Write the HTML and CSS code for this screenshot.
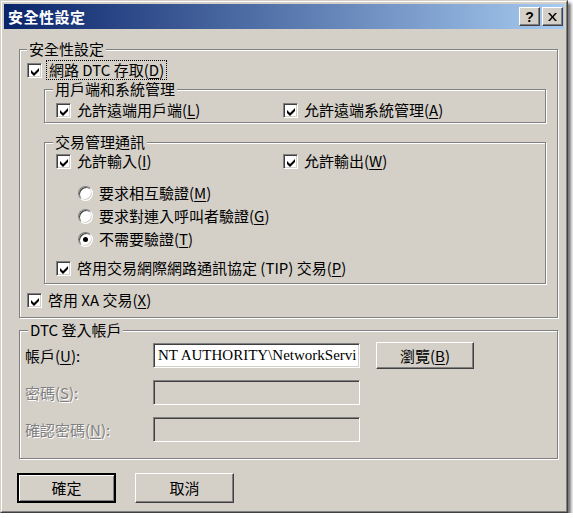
FILE: index.html
```html
<!DOCTYPE html>
<html lang="zh-Hant">
<head>
<meta charset="utf-8">
<title>安全性設定</title>
<link rel="stylesheet" href="styles.css">
</head>
<body>
<div class="window">
  <div class="frame">
    <div class="titlebar">
      <span class="title">安全性設定</span>
      <div class="title-btns">
        <span class="tbtn help">?</span>
        <span class="tbtn close"><svg width="9" height="8" viewBox="0 0 9 8"><path d="M0 0h2l2.5 3 2.5-3h2L5.5 4 9 8H7L4.5 5 2 8H0l3.5-4z" fill="#000"/></svg></span>
      </div>
    </div>
    <div class="body">
      <fieldset class="group outer">
        <legend>安全性設定</legend>
        <div class="check row">
          <span class="box"><svg class="tick" viewBox="0 0 10 10"><path d="M1 4 4 7 9 2V5L4 10 1 7Z"/></svg></span><span class="lbl focus">網路 DTC 存取(<u>D</u>)</span>
        </div>
        <fieldset class="group inner admin">
          <legend>用戶端和系統管理</legend>
          <div class="pair">
            <div class="check row"><span class="box"><svg class="tick" viewBox="0 0 10 10"><path d="M1 4 4 7 9 2V5L4 10 1 7Z"/></svg></span><span class="lbl">允許遠端用戶端(<u>L</u>)</span></div>
            <div class="check row"><span class="box"><svg class="tick" viewBox="0 0 10 10"><path d="M1 4 4 7 9 2V5L4 10 1 7Z"/></svg></span><span class="lbl">允許遠端系統管理(<u>A</u>)</span></div>
          </div>
        </fieldset>
        <fieldset class="group inner tx">
          <legend>交易管理通訊</legend>
          <div class="pair">
            <div class="check row"><span class="box"><svg class="tick" viewBox="0 0 10 10"><path d="M1 4 4 7 9 2V5L4 10 1 7Z"/></svg></span><span class="lbl">允許輸入(<u>I</u>)</span></div>
            <div class="check row"><span class="box"><svg class="tick" viewBox="0 0 10 10"><path d="M1 4 4 7 9 2V5L4 10 1 7Z"/></svg></span><span class="lbl">允許輸出(<u>W</u>)</span></div>
          </div>
          <div class="radios">
            <div class="radio row"><span class="dot"></span><span class="lbl">要求相互驗證(<u>M</u>)</span></div>
            <div class="radio row"><span class="dot"></span><span class="lbl">要求對連入呼叫者驗證(<u>G</u>)</span></div>
            <div class="radio row"><span class="dot on"></span><span class="lbl">不需要驗證(<u>T</u>)</span></div>
          </div>
          <div class="check row tip"><span class="box"><svg class="tick" viewBox="0 0 10 10"><path d="M1 4 4 7 9 2V5L4 10 1 7Z"/></svg></span><span class="lbl">啓用交易網際網路通訊協定 (TIP) 交易(<u>P</u>)</span></div>
        </fieldset>
        <div class="check row xa"><span class="box"><svg class="tick" viewBox="0 0 10 10"><path d="M1 4 4 7 9 2V5L4 10 1 7Z"/></svg></span><span class="lbl">啓用 XA 交易(<u>X</u>)</span></div>
      </fieldset>

      <fieldset class="group account">
        <legend>DTC 登入帳戶</legend>
        <div class="form">
          <span class="flabel">帳戶(<u>U</u>):</span>
          <div class="field">NT AUTHORITY\NetworkServi</div>
          <span class="btn browse">瀏覽(<u>B</u>)</span>
          <span class="flabel disabled">密碼(<u>S</u>):</span>
          <div class="field off"></div>
          <span></span>
          <span class="flabel disabled">確認密碼(<u>N</u>):</span>
          <div class="field off"></div>
          <span></span>
        </div>
      </fieldset>

      <div class="actions">
        <span class="btn default">確定</span>
        <span class="btn">取消</span>
      </div>
    </div>
  </div>
</div>
</body>
</html>
```

FILE: styles.css
```css
* { box-sizing: border-box; }
html, body { margin: 0; padding: 0; background: #fff; }
body {
  font-family: "Noto Sans CJK TC", "Noto Sans", sans-serif;
  font-size: 15px;
  line-height: 18px;
  color: #000;
}
u { text-decoration: underline; text-underline-offset: 2px; text-decoration-thickness: 1px; }

.window {
  width: 568px;
  height: 513px;
  background: #d4d0c8;
  border: 1px solid;
  border-color: #d4d0c8 #404040 #404040 #d4d0c8;
  box-shadow: 3px 3px 3px rgba(0, 0, 0, 0.55);
}
.frame {
  height: 100%;
  border: 1px solid;
  border-color: #fff #808080 #808080 #fff;
  padding: 2px;
  display: flex;
  flex-direction: column;
}
.titlebar {
  height: 25px;
  flex: none;
  display: flex;
  align-items: center;
  justify-content: space-between;
  padding: 0 1px 0 4px;
  background: linear-gradient(to right, #0a246a, #a6caf0);
}
.title { color: #fff; font-weight: 700; font-size: 15px; letter-spacing: 0.5px; }
.title-btns { display: flex; gap: 1px; }
.tbtn {
  width: 21px;
  height: 19px;
  display: flex;
  align-items: center;
  justify-content: center;
  background: #d4d0c8;
  border: 1px solid;
  border-color: #fff #404040 #404040 #fff;
  box-shadow: inset -1px -1px 0 #808080;
  font-family: "Liberation Sans", sans-serif;
  font-weight: 700;
  font-size: 14px;
  line-height: 1;
}
.tbtn.help { margin-right: 1px; }

.body { flex: 1; padding: 11px 6px 0 15px; display: flex; flex-direction: column; }

.group {
  margin: 0;
  border: 1px solid #808080;
  box-shadow: inset 1px 1px 0 #fff, 1px 1px 0 #fff;
  min-width: 0;
}
.group > legend { padding: 0 2px; line-height: 18px; background: #d4d0c8; }

.outer { padding: 2px 11px 7px 7px; }
.inner { margin-left: 17px; padding: 2px 10px 2px 11px; }
.inner > legend { margin-left: -3px; }
.tx { margin-top: 10px; padding-top: 0; padding-bottom: 0; }

.row { display: flex; align-items: center; height: 20px; white-space: nowrap; }
.check .lbl, .radio .lbl { margin-left: 6px; }
.check .lbl.focus { outline: 1px dotted #000; outline-offset: 0; padding: 0 2px; margin-left: 5px; }

.box {
  width: 15px;
  height: 15px;
  flex: none;
  background: #fff;
  border: 1px solid;
  border-color: #808080 #fff #fff #808080;
  box-shadow: inset 1px 1px 0 #404040, inset -1px -1px 0 #d4d0c8;
  display: flex;
  align-items: center;
  justify-content: center;
}
.tick { width: 10px; height: 10px; fill: #000; margin: 1px 0 0 1px; }

.pair { display: grid; grid-template-columns: 227px auto; }

.radios { display: flex; flex-direction: column; gap: 3px; padding: 12px 0 7px 22px; }
.dot {
  width: 15px;
  height: 15px;
  flex: none;
  border-radius: 50%;
  background: #fff;
  border: 1px solid;
  border-color: #808080 #fff #fff #808080;
  box-shadow: inset 1px 1px 0 #404040, inset -1px -1px 0 #d4d0c8;
  display: flex;
  align-items: center;
  justify-content: center;
}
.dot.on::after { content: ""; width: 5px; height: 5px; border-radius: 50%; background: #000; }

.tip { margin-top: 2px; margin-bottom: 5px; }
.xa { margin-top: 6px; margin-left: 0; }

.account { margin-top: 3px; padding: 4px 10px 16px 5px; }
.account > legend { margin-left: 3px; }
.form {
  display: grid;
  grid-template-columns: 112px 207px 98px;
  grid-auto-rows: 25px;
  column-gap: 16px;
  row-gap: 12px;
  align-items: center;
}
.flabel { white-space: nowrap; }
.flabel.disabled { color: #808080; text-shadow: 1px 1px 0 #fff; }
.field {
  height: 25px;
  background: #fff;
  border: 1px solid;
  border-color: #808080 #fff #fff #808080;
  box-shadow: inset 1px 1px 0 #404040, inset -1px -1px 0 #d4d0c8;
  padding: 2px 3px 0 4px;
  font-family: "Liberation Serif", serif;
  font-size: 15px;
  white-space: nowrap;
  overflow: hidden;
}
.field.off { background: #d4d0c8; }

.btn {
  display: flex;
  align-items: center;
  justify-content: center;
  height: 30px;
  width: 99px;
  background: #d4d0c8;
  border: 1px solid;
  border-color: #fff #404040 #404040 #fff;
  box-shadow: inset -1px -1px 0 #808080, inset 1px 1px 0 #d4d0c8;
}
.btn.browse { height: 27px; width: 98px; }
.btn.default {
  border: 2px solid #000;
  box-shadow: inset 1px 1px 0 #fff, inset -1px -1px 0 #808080;
}

.actions { display: flex; gap: 19px; margin-top: 14px; margin-left: -2px; }
```
